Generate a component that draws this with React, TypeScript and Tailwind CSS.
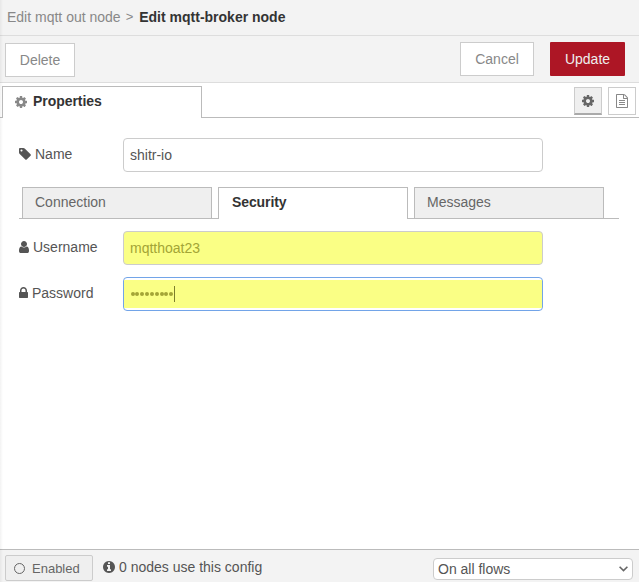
import React from "react";

const PATHS = {
  cog: "M1152 896q0-106-75-181t-181-75-181 75-75 181 75 181 181 75 181-75 75-181zm512-109v222q0 12-8 23t-20 13l-185 28q-19 54-39 91 35 50 107 138 10 12 10 25t-9 23q-27 37-99 108t-94 71q-12 0-26-9l-138-108q-44 23-91 38-16 136-29 186-7 28-36 28h-222q-14 0-24.5-8.5t-11.5-21.5l-28-184q-49-16-90-37l-141 107q-10 9-25 9-14 0-25-11-126-114-165-168-7-10-7-23 0-12 8-23 15-21 51-66.5t54-70.5q-27-50-41-99l-183-27q-13-2-21-12.5t-8-23.5v-222q0-12 8-23t19-13l186-28q14-46 39-92-40-57-107-138-10-12-10-24 0-10 9-23 26-36 98.5-107.5t94.5-71.5q13 0 26 10l138 107q44-23 91-38 16-136 29-186 7-28 36-28h222q14 0 24.5 8.5t11.5 21.5l28 184q49 16 90 37l142-107q9-9 24-9 13 0 25 10 129 119 165 170 7 8 7 22 0 12-8 23-15 21-51 66.5t-54 70.5q26 50 41 98l183 28q13 2 21 12.5t8 23.5z",
  tag: "M576 448q0-53-37.5-90.5t-90.5-37.5-90.5 37.5-37.5 90.5 37.5 90.5 90.5 37.5 90.5-37.5 37.5-90.5zm1067 576q0 53-37 90l-491 492q-39 37-91 37-53 0-90-37l-715-716q-38-37-64.5-101t-26.5-117v-416q0-52 38-90t90-38h416q53 0 117 26.5t102 64.5l715 714q37 39 37 91z",
  user: "M1536 1399q0 109-62.5 187t-150.5 78h-854q-88 0-150.5-78t-62.5-187q0-85 8.5-160.5t31.5-152 58.5-131 94-89 134.5-34.5q131 128 313 128t313-128q76 0 134.5 34.5t94 89 58.5 131 31.5 152 8.5 160.5zm-256-887q0 159-112.5 271.5t-271.5 112.5-271.5-112.5-112.5-271.5 112.5-271.5 271.5-112.5 271.5 112.5 112.5 271.5z",
  lock: "M640 768h512v-192q0-106-75-181t-181-75-181 75-75 181v192zm832 96v576q0 40-28 68t-68 28h-960q-40 0-68-28t-28-68v-576q0-40 28-68t68-28h32v-192q0-184 132-316t316-132 316 132 132 316v192h32q40 0 68 28t28 68z",
  info: "M1152 1376v-160q0-14-9-23t-23-9h-96v-512q0-14-9-23t-23-9h-320q-14 0-23 9t-9 23v160q0 14 9 23t23 9h96v320h-96q-14 0-23 9t-9 23v160q0 14 9 23t23 9h448q14 0 23-9t9-23zm-128-896v-160q0-14-9-23t-23-9h-192q-14 0-23 9t-9 23v160q0 14 9 23t23 9h192q14 0 23-9t9-23zm640 416q0 209-103 385.5t-279.5 279.5-385.5 103-385.5-103-279.5-279.5-103-385.5 103-385.5 279.5-279.5 385.5-103 385.5 103 279.5 279.5 103 385.5z",
  file: "M1596 380q28 28 48 76t20 88v1152q0 40-28 68t-68 28h-1344q-40 0-68-28t-28-68v-1600q0-40 28-68t68-28h896q40 0 88 20t76 48zm-444-244v376h376q-10-29-22-41l-313-313q-12-12-41-22zm384 1528v-1024h-416q-40 0-68-28t-28-68v-416h-768v1536h1280zm-1024-864q0-14 9-23t23-9h704q14 0 23 9t9 23v64q0 14-9 23t-23 9h-704q-14 0-23-9t-9-23v-64zm736 224q14 0 23 9t9 23v64q0 14-9 23t-23 9h-704q-14 0-23-9t-9-23v-64q0-14 9-23t23-9h704zm0 256q14 0 23 9t9 23v64q0 14-9 23t-23 9h-704q-14 0-23-9t-9-23v-64q0-14 9-23t23-9h704z",
};

// Icons are drawn on a 1792 unit grid, 128 units to the pixel. `left` trims the empty margin.
function Icon({ name, width, left = 128, className = "" }: {
  name: keyof typeof PATHS;
  width: number;
  left?: number;
  className?: string;
}) {
  return (
    <svg
      width={width}
      height={14}
      viewBox={`${left} 0 ${width * 128} 1792`}
      fill="currentColor"
      className={`shrink-0 ${className}`}
    >
      <path d={PATHS[name]} />
    </svg>
  );
}

function Tab({ label, active = false }: { label: string; active?: boolean }) {
  return (
    <div
      className={
        active
          ? "h-8 w-[190px] border border-b-0 border-[#bbbbbb] bg-white pl-[13px] leading-[29px] font-bold tracking-[-0.1px] text-[#333333]"
          : "h-[31px] w-[190px] border border-b-0 border-[#bbbbbb] bg-[#efefef] pl-3 leading-[29px] text-[#666666]"
      }
    >
      {label}
    </div>
  );
}

function Row({ icon, label, children }: { icon: React.ReactNode; label: string; children: React.ReactNode }) {
  return (
    <div className="flex h-[34px]">
      <div className="flex h-8 w-[104px] items-center gap-1 text-[#555555]">
        {icon}
        <span>{label}</span>
      </div>
      {children}
    </div>
  );
}

export default function App() {
  return (
    <div className="relative flex h-[582px] w-[639px] flex-col overflow-hidden bg-white font-['Liberation_Sans',Arial,sans-serif] text-[14px] leading-5">
      <header className="flex h-9 shrink-0 items-center whitespace-pre border-b border-[#dddddd] bg-[#f3f3f3] pb-[2px] pl-[7px] text-[#888888]">
        <span>Edit mqtt out node</span>
        <span className="pr-[6px] pl-[5px] text-[13px]">&gt;</span>
        <span className="font-bold text-[#333333]">Edit mqtt-broker node</span>
      </header>

      <div className="flex h-[47px] shrink-0 items-start border-b border-[#dddddd] bg-[#f3f3f3] pt-[6px] pr-[14px] pl-[5px] text-[#888888]">
        <button className="mt-px h-[34px] w-[70px] border border-[#cccccc] bg-white">Delete</button>
        <button className="ml-auto h-[34px] w-[74px] border border-[#cccccc] bg-white">Cancel</button>
        <button className="ml-4 h-[34px] w-[75px] rounded-[1px] bg-[#ad1625] text-[#eeeeee]">Update</button>
      </div>

      <div className="flex h-[35px] shrink-0 pt-[3px]">
        <div className="h-8 w-[2px] border-b border-[#bbbbbb]" />
        <div className="flex h-8 w-[200px] items-center gap-[6px] border border-b-0 border-[#bbbbbb] bg-white pb-[2px] pl-3 font-bold text-[#333333]">
          <Icon name="cog" width={12} className="text-[#888888]" />
          <span className="-mt-px pb-px tracking-[-0.05px]">Properties</span>
        </div>
        <div className="flex h-8 flex-1 justify-end gap-[6px] border-b border-[#bbbbbb] pt-px pr-[3px]">
          <button className="flex h-7 w-7 items-center justify-center border border-b-2 border-[#cccccc] border-b-[#aaaaaa] bg-[#efefef] text-[#666666]">
            <Icon name="cog" width={12} />
          </button>
          <button className="flex h-7 w-7 items-center justify-center border border-[#cccccc] bg-white text-[#888888]">
            <Icon name="file" width={12} />
          </button>
        </div>
      </div>

      <main className="flex-1 pt-5 pl-[19px]">
        <Row icon={<Icon name="tag" width={12} />} label="Name">
          <div className="h-[34px] w-[420px] rounded-[4px] border border-[#cccccc] bg-white pl-[6px] leading-[33px] text-[#555555]">
            shitr-io
          </div>
        </Row>

        <div className="mt-[15px] flex h-8 w-[600px]">
          <div className="w-[3px] border-b border-[#bbbbbb]" />
          <div className="w-[190px] border-b border-[#bbbbbb]"><Tab label="Connection" /></div>
          <div className="w-[6px] border-b border-[#bbbbbb]" />
          <Tab label="Security" active />
          <div className="w-[6px] border-b border-[#bbbbbb]" />
          <div className="flex-1 border-b border-[#bbbbbb]"><Tab label="Messages" /></div>
        </div>

        <div className="mt-3 flex flex-col gap-3">
          <Row icon={<Icon name="user" width={10} left={256} />} label="Username">
            <div className="h-[34px] w-[420px] rounded-[4px] border border-[#cccccc] bg-[#faff85] pl-[6px] leading-[33px] text-[#a3a536]">
              mqtthoat23
            </div>
          </Row>
          <Row icon={<Icon name="lock" width={9} left={320} />} label="Password">
            <div className="h-[34px] w-[420px] rounded-[4px] border border-[#72a4e8] bg-white py-[2px]">
              <div className="flex h-7 items-center bg-[#faff85] pl-[6px] text-[#a3a536]">
                <span className="flex w-11 gap-[0.85px] pl-[0.5px]">
                  {Array.from({ length: 9 }, (_, i) => (
                    <i key={i} className="h-1 w-1 shrink-0 rounded-full bg-current" />
                  ))}
                </span>
                <i className="h-4 w-px bg-[#7c7e2c]" />
              </div>
            </div>
          </Row>
        </div>
      </main>

      <footer className="flex h-[33px] shrink-0 items-start border-t border-[#bbbbbb] bg-[#f3f3f3] pr-[6px] pl-[5px] text-[#555555]">
        <button className="mt-[5px] flex h-[26px] w-[88px] items-center rounded-[2px] border border-[#cccccc] bg-[#efefef] pl-2 text-[13px] text-[#666666]">
          <span className="mr-[7px] h-[11px] w-[11px] rounded-full border border-[#666666]" />
          <span className="pt-[2px]">Enabled</span>
        </button>
        <div className="mt-[7px] ml-[10px] flex items-center gap-1">
          <Icon name="info" width={12} />
          0 nodes use this config
        </div>
        <div className="mt-2 ml-auto flex h-[22px] w-[200px] items-center justify-between rounded-[4px] border border-[#cccccc] bg-white pr-1 pl-1">
          On all flows
          <svg width="9" height="6" viewBox="0 0 9 6" fill="none" stroke="#666666" strokeWidth="1.6">
            <path d="M.6.7 4.5 4.6 8.4.7" />
          </svg>
        </div>
      </footer>

      <div className="pointer-events-none absolute inset-y-0 left-0 w-[3px] bg-linear-to-r from-black/5 to-transparent" />
    </div>
  );
}
